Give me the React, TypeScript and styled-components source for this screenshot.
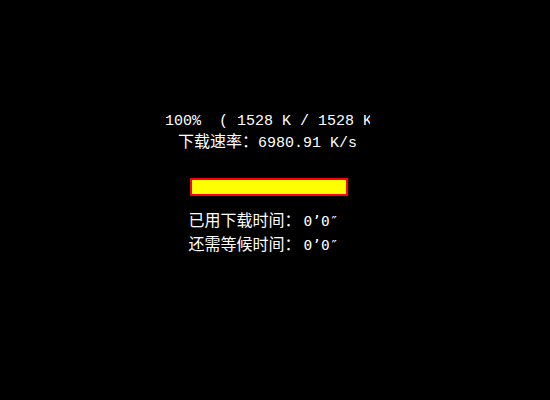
import React from 'react';
import styled, { createGlobalStyle } from 'styled-components';

const GlobalStyle = createGlobalStyle`
  html, body {
    margin: 0;
    padding: 0;
    background: #000;
  }
`;

const Screen = styled.div`
  width: 550px;
  height: 400px;
  background: #000;
  color: #fff;
  display: flex;
  flex-direction: column;
  align-items: center;
  padding: 113px 15px 0 0;
  box-sizing: border-box;
  font-family: "Liberation Mono", "DejaVu Sans Mono", "Noto Sans CJK SC", monospace;
  font-size: 15px;
`;

const Block = styled.div<{ $lineHeight: number; $shift?: number; $clip?: boolean }>`
  width: 205px;
  overflow: ${(p) => (p.$clip ? 'hidden' : 'visible')};
  white-space: nowrap;
  text-align: center;
  line-height: ${(p) => p.$lineHeight}px;
  margin-right: ${(p) => (p.$shift ?? 0) * 2}px;
`;

const Line = styled.div`
  white-space: pre;
`;

const Han = styled.span`
  font-family: "Noto Sans CJK SC", sans-serif;
  font-size: 16px;
`;

const Time = styled.span`
  padding-left: 3px;
  font-family: "DejaVu Sans Mono", "Liberation Mono", monospace;
  font-size: 14.5px;
`;

const Bar = styled.div`
  width: 158px;
  height: 18px;
  margin: 25px 0 13px 2px;
  box-sizing: border-box;
  border: 2px solid #ff0000;
  background: #ffff00;
`;

const Fill = styled.div`
  height: 100%;
  background: #ffff00;
`;

const stats = {
  percent: 100,
  done: 1528,
  total: 1528,
  speed: '6980.91',
};

export default function App() {
  const ratio = stats.done / stats.total;
  return (
    <>
      <GlobalStyle />
      <Screen>
        <Block $lineHeight={18} $clip>
          <Line>{`${stats.percent}%  ( ${stats.done} K / ${stats.total} K )`}</Line>
          <Line>
            <Han>下载速率：</Han>
            {`${stats.speed} K/s`}
          </Line>
        </Block>
        <Bar>
          <Fill style={{ width: `${ratio * 100}%` }} />
        </Bar>
        <Block $lineHeight={21} $shift={4}>
          <Line>
            <Han>已用下载时间：</Han>
            <Time>0’0″</Time>
          </Line>
          <Line>
            <Han>还需等候时间：</Han>
            <Time>0’0″</Time>
          </Line>
        </Block>
      </Screen>
    </>
  );
}
